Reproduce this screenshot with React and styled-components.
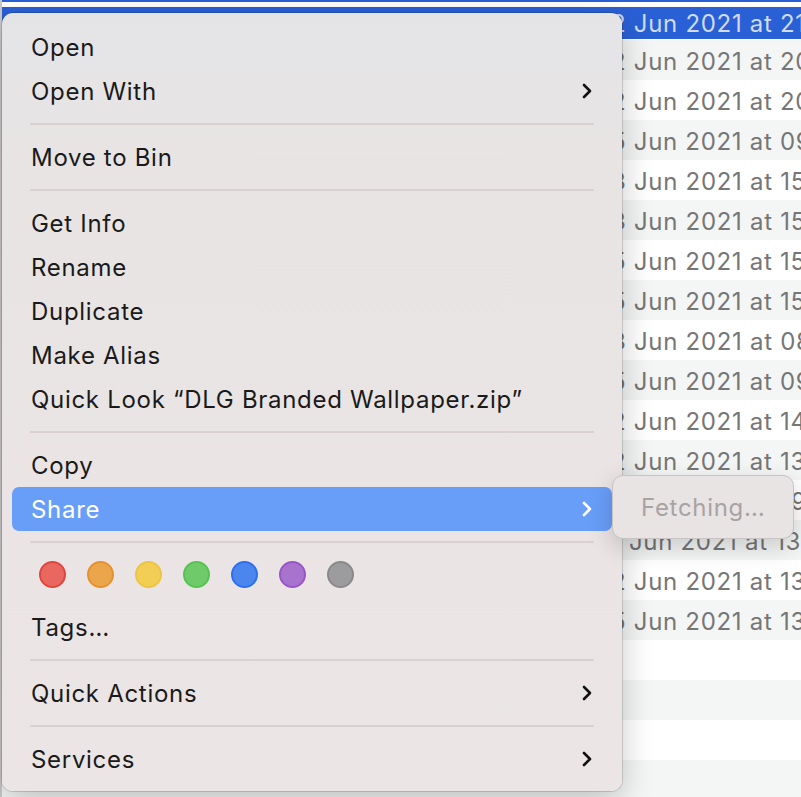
import React from 'react'
import styled, { createGlobalStyle } from 'styled-components'

const GlobalStyle = createGlobalStyle`
  html, body {
    margin: 0;
    padding: 0;
    background: #ffffff;
    overflow: hidden;
  }
  * {
    box-sizing: border-box;
  }
`

const Screen = styled.div`
  position: relative;
  width: 801px;
  height: 797px;
  overflow: hidden;
  font-family: Inter, 'Noto Sans', 'Liberation Sans', sans-serif;
  letter-spacing: 0.7px;
  -webkit-font-smoothing: antialiased;
`

const FileList = styled.div`
  display: flex;
  flex-direction: column;
  border-left: 2px solid #c9c9c9;
`

const TopRule = styled.div`
  height: 2px;
  margin-bottom: 5px;
  background: #2a60d6;
`

const Row = styled.div`
  display: flex;
  align-items: center;
  height: ${p => (p.selected ? '32px' : '40px')};
  margin-bottom: ${p => (p.selected ? '1px' : '0')};
  padding-left: 609px;
  padding-top: ${p => (p.selected ? '0' : '3px')};
  background: ${p =>
    p.selected ? '#2a60d6' : p.odd ? '#f4f5f5' : '#ffffff'};
  color: ${p => (p.selected ? 'rgba(255,255,255,0.78)' : '#767676')};
  font-size: 24px;
  white-space: nowrap;
  overflow: hidden;
`

const Menu = styled.div`
  position: absolute;
  top: 13px;
  left: 2px;
  width: 620px;
  padding: 12px 10px 10px;
  display: flex;
  flex-direction: column;
  border-radius: 11px;
  background: linear-gradient(180deg, #e4e4e7 0px, #e9e4e4 160px, #ebe5e5 100%);
  box-shadow: 0 0 0 1px rgba(0, 0, 0, 0.14), 0 10px 32px rgba(0, 0, 0, 0.22);
`

const Item = styled.div`
  display: flex;
  align-items: center;
  justify-content: space-between;
  height: 44px;
  padding: 0 20px 0 19px;
  border-radius: 7px;
  font-size: 24px;
  color: ${p => (p.active ? '#ffffff' : '#1a1a1a')};
  background: ${p => (p.active ? '#689ef8' : 'transparent')};
  margin-top: ${p => (p.gap ? '8px' : '0')};
  white-space: nowrap;
`

const Separator = styled.div`
  height: 2px;
  margin: 10px 18px;
  background: #d7d1d1;
`

const ColourRow = styled.div`
  display: flex;
  gap: 21px;
  height: 44px;
  padding: 8px 0 0 27px;
`

const Dot = styled.span`
  width: 27px;
  height: 27px;
  border-radius: 50%;
  background: ${p => p.fill};
  border: 2px solid ${p => p.edge};
`

const Submenu = styled.div`
  position: absolute;
  top: 475px;
  left: 612px;
  width: 182px;
  height: 64px;
  display: flex;
  align-items: center;
  padding-left: 28px;
  border-radius: 11px;
  background: #e9e4e4;
  border: 1px solid #c9c3c3;
  box-shadow: 0 8px 24px rgba(0, 0, 0, 0.18);
  color: #a8a3a3;
  font-size: 24px;
`

const Chevron = ({ color = '#111' }) => (
  <svg width="10" height="16" viewBox="0 0 10 16">
    <path
      d="M2 2 L8 8 L2 14"
      fill="none"
      stroke={color}
      strokeWidth="2.6"
      strokeLinecap="round"
      strokeLinejoin="round"
    />
  </svg>
)

const dates = [
  '2 Jun 2021 at 20:14',
  '2 Jun 2021 at 20:11',
  '5 Jun 2021 at 09:32',
  '3 Jun 2021 at 15:40',
  '3 Jun 2021 at 15:38',
  '5 Jun 2021 at 15:02',
  '5 Jun 2021 at 15:01',
  '3 Jun 2021 at 08:47',
  '5 Jun 2021 at 09:12',
  '2 Jun 2021 at 14:25',
  '2 Jun 2021 at 13:58',
  '1 Jun 2021 at 09:44',
  '1 Jun 2021 at 13:20',
  '2 Jun 2021 at 13:16',
  '5 Jun 2021 at 13:05',
  '',
  '',
  '',
  '',
]

const colours = [
  ['#e8675e', '#e0463d'],
  ['#eba54b', '#e6902e'],
  ['#f2cf54', '#ebc443'],
  ['#6fcb6a', '#56c24f'],
  ['#4a86ee', '#2e6ff0'],
  ['#a873cc', '#9a54c9'],
  ['#9c9b9d', '#8a898b'],
]

const App = () => (
  <Screen>
    <GlobalStyle />
    <FileList>
      <TopRule />
      <Row selected>2 Jun 2021 at 21:03</Row>
      {dates.map((d, i) => (
        <Row key={i} odd={i % 2 === 0}>
          {d}
        </Row>
      ))}
    </FileList>

    <Menu>
      <Item>Open</Item>
      <Item>
        Open With
        <Chevron />
      </Item>
      <Separator />
      <Item>Move to Bin</Item>
      <Separator />
      <Item>Get Info</Item>
      <Item>Rename</Item>
      <Item>Duplicate</Item>
      <Item>Make Alias</Item>
      <Item>Quick Look “DLG Branded Wallpaper.zip”</Item>
      <Separator />
      <Item>Copy</Item>
      <Item active>
        Share
        <Chevron color="#ffffff" />
      </Item>
      <Separator />
      <ColourRow>
        {colours.map(([fill, edge]) => (
          <Dot key={fill} fill={fill} edge={edge} />
        ))}
      </ColourRow>
      <Item gap>Tags…</Item>
      <Separator />
      <Item>
        Quick Actions
        <Chevron />
      </Item>
      <Separator />
      <Item>
        Services
        <Chevron />
      </Item>
    </Menu>

    <Submenu>Fetching…</Submenu>
  </Screen>
)

export default App
